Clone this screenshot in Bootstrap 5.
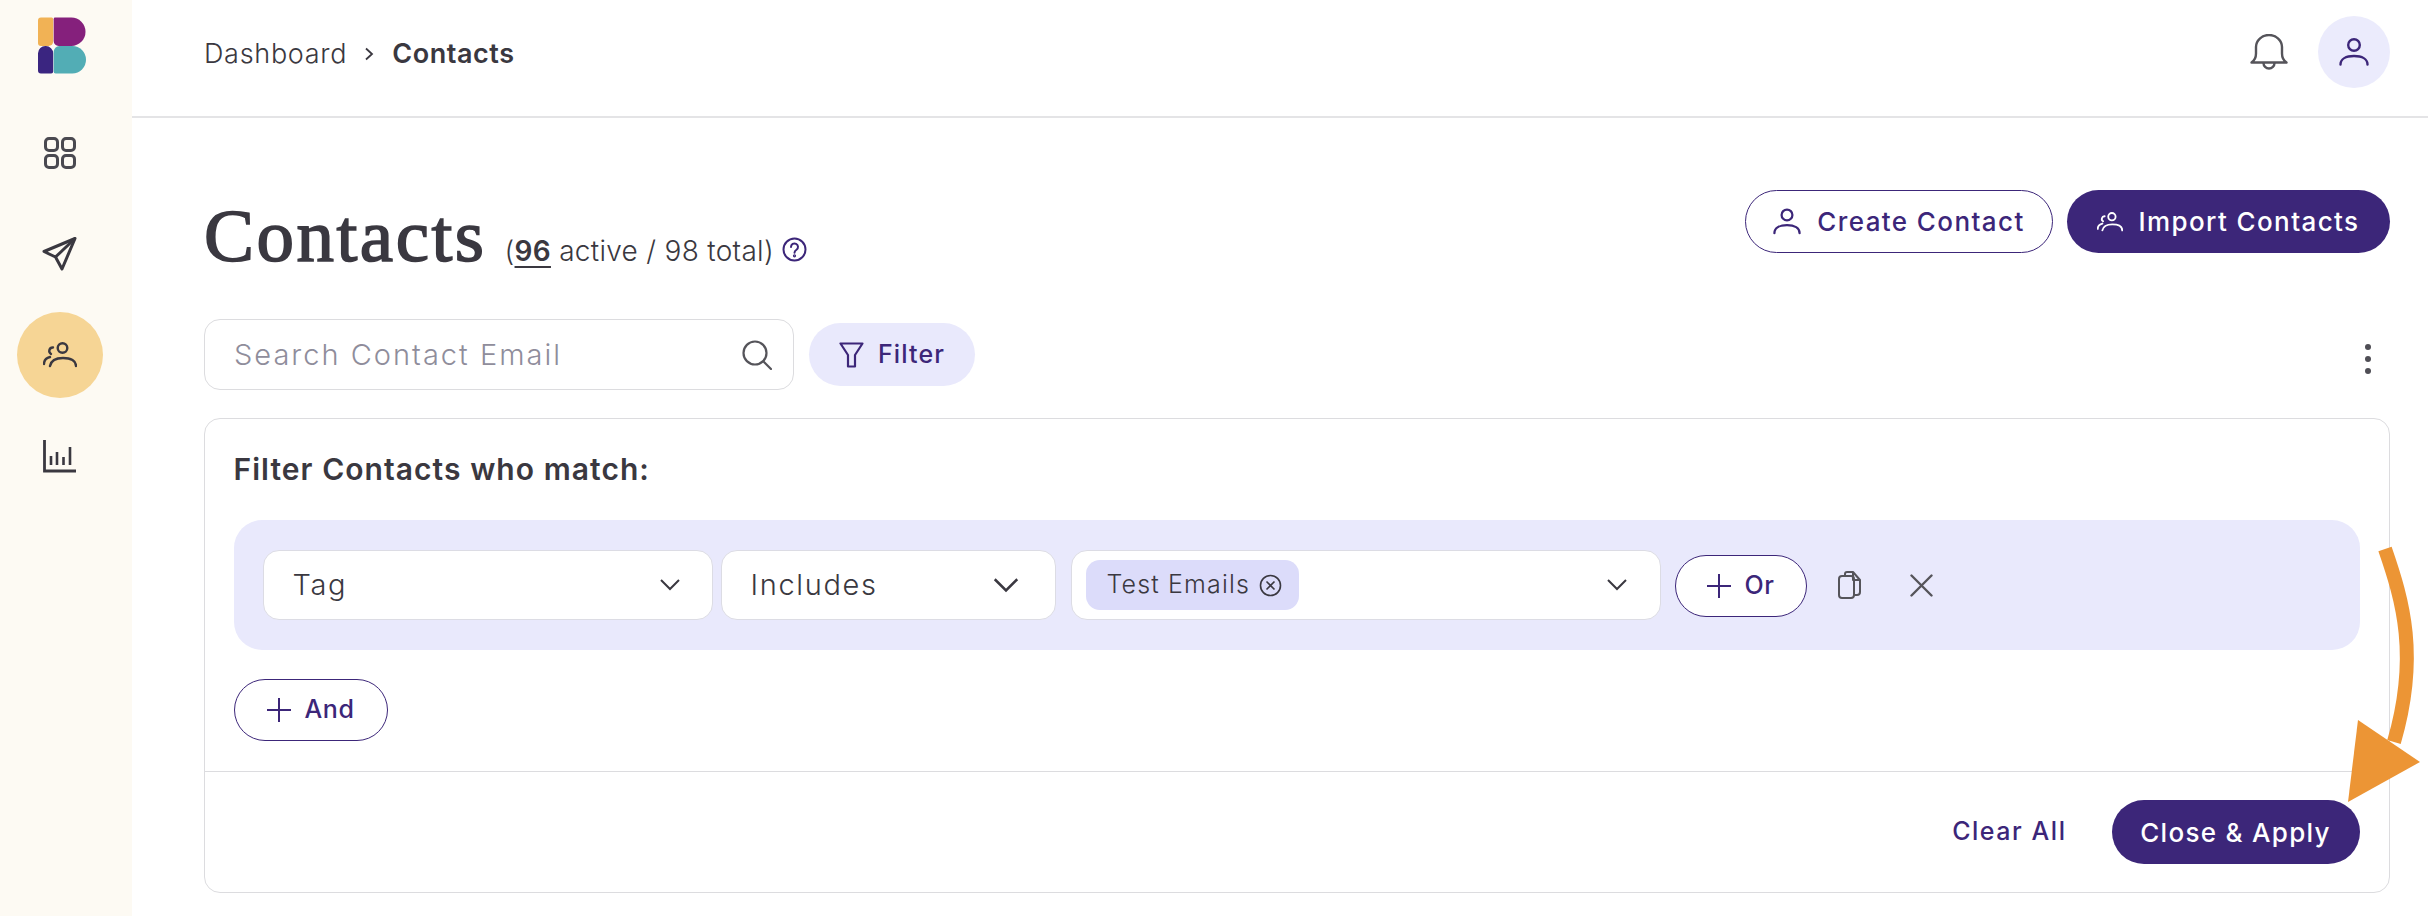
<!doctype html>
<html lang="en"><head><meta charset="utf-8"><title>Contacts</title>
<link href="https://cdn.jsdelivr.net/npm/bootstrap@5.3.0/dist/css/bootstrap.min.css" rel="stylesheet">
<style>
:root{--ink:#3a3840;--pur:#3c2679;--lav:#e9e9fc;--line:#dcdcdf}
html,body{height:916px;overflow:hidden}
body{font-family:Inter,"Noto Sans",sans-serif;color:var(--ink);background:#fff}
svg{display:block;flex:none}
.appwrap{height:916px;position:relative}
.siderail{width:132px;background:#fdfaf3;flex:none}
.brand{margin:17px 0 36px 38px;width:48px;height:57px}
.railitem{width:86px;height:86px;margin:0 0 15px 17px;border-radius:50%}
.railitem.on{background:#f6d595}
.topbar{height:118px;border-bottom:2px solid #e4e4e6;padding:0 38px 12px 72px}
.crumb{font-size:27px;font-weight:300;letter-spacing:.7px;margin-top:4px}
.crumb b{font-weight:600;letter-spacing:.55px}
.crumbsep{margin:0 18px 0 17px}
.avatarbtn{width:72px;height:72px;border-radius:50%;background:#ebebfc;margin-left:30px}
.workarea{padding:72px 38px 0 72px}
.titlerow{height:63px;margin-bottom:66px}
.pagehead{font-family:"Liberation Serif",serif;font-weight:400;-webkit-text-stroke:1.6px var(--ink);font-size:75px;line-height:63px;margin:0;color:var(--ink);letter-spacing:2.5px;position:relative;top:14px}
.countline{font-size:28px;font-weight:300;letter-spacing:.3px;margin-left:18px;position:relative;top:14px}
.countline u{font-weight:600;text-underline-offset:5px}
.helpmark{margin:0 0 0 8px;position:relative;top:25px}
.pillbtn{height:63px;border-radius:32px;font-size:26px;font-weight:500;letter-spacing:1.4px;padding:0;display:inline-flex;align-items:center;justify-content:center}
.pillbtn.solid,.pillbtn.solid:hover{background:var(--pur);color:#fff;border:0}
.pillbtn.ghost,.pillbtn.ghost:hover{background:#fff;color:var(--pur);border:1.5px solid var(--pur)}
.actionset{gap:14px}
.createbtn{width:308px;gap:16px}
.importbtn{width:323px;gap:15px}
.searchbox{width:590px;height:71px;border:1.5px solid var(--line);border-radius:16px;padding:0 21px 0 29px}
.searchbox input{border:0;outline:0;padding:0;font-size:29px;font-weight:300;letter-spacing:2px;color:var(--ink);background:transparent;box-shadow:none}
.searchbox input::placeholder{color:#8f8d9b;opacity:1}
.pillbtn.filterbtn{width:166px;background:var(--lav);border:0;color:var(--pur);margin-left:15px;gap:14px;font-size:25px;letter-spacing:1.1px}
.filterbtn:hover{background:var(--lav);color:var(--pur)}
.kebabwrap{margin:0 19px 0 auto;padding-top:8px;gap:6px}
.kebabwrap i{width:6px;height:6px;border-radius:50%;background:#4f4e55;display:block}
.filtercard{--bs-card-border-color:var(--line);--bs-card-border-radius:16px;border-width:1.5px;height:475px;margin-top:28px;width:2186px}
.filtertitle{font-size:30px;font-weight:600;line-height:34px;margin:0 0 34px;letter-spacing:1.05px;color:var(--ink)}
.filterbody{padding:33px 29.500px 0 28.500px}
.rulepanel{height:130px;background:var(--lav);border-radius:28px;padding:0 29px}
.fieldbox{height:70px;background:#fff;border:1.5px solid #dcdce4;border-radius:16px;padding:0 32px 0 29px;font-size:29px;font-weight:300;letter-spacing:1.65px}
.fieldtag{width:450px;margin-right:8px}
.fieldop{width:335px;margin-right:15px}
.fieldval{width:590px;padding:0 33px 0 14px;margin-right:14px}
.fieldop svg{width:26px;height:15px;margin-right:4px}
.chipval{height:50px;width:213px;background:#dcdcfa;border-radius:14px;font-size:25px;font-weight:300;gap:9px;padding-left:21px;letter-spacing:1.15px}
.pillbtn.addbtn{height:62px;background:#fff;gap:12px;font-size:25px;letter-spacing:.6px}
.addor{width:132px;margin-top:2px}
.addand{width:154px;margin-top:29px}
.iconact{margin-left:31px}
.iconx{margin-left:49px}
.cardfoot{height:121px;border-top:1.5px solid var(--line);padding:0 29.500px 0 0;gap:45px}
.clearlink{font-size:25px;font-weight:500;color:var(--pur);text-decoration:none;letter-spacing:1.55px}
.closebtn{width:248px;height:64px}
.pillbtn.closebtn{letter-spacing:1.3px}
.callout{position:absolute;left:2340px;top:540px}
</style></head>
<body>
<div class="appwrap d-flex">
<aside class="siderail d-flex flex-column">
  <svg class="brand" viewBox="0 0 49 57"><path fill="#f1b255" d="M3 0h11q1.500 0 1.500 2v22q0 5-5 5H3q-3 0-3-3V3q0-3 3-3z"/><path fill="#85207c" d="M17 0h17a14.500 14.500 0 0 1 0 29H21a5 5 0 0 1-5-5V2q0-2 1-2z"/><path fill="#3a2580" d="M8 29a7.500 7.500 0 0 1 7.500 7.500V55q0 2-2 2H3q-3 0-3-3V36.500A7.500 7.500 0 0 1 8 29z"/><path fill="#52adb5" d="M22 29h13a14 14 0 0 1 0 28H18q-2 0-2-2V35a6 6 0 0 1 6-6z"/></svg>
  <div class="railitem d-flex align-items-center justify-content-center"><svg width="32" height="32" viewBox="0 0 32 32" fill="none" stroke="#4a4950" stroke-width="3"><rect x="1.500" y="1.500" width="12" height="12" rx="3.500"/><rect x="18.500" y="1.500" width="12" height="12" rx="3.500"/><rect x="1.500" y="18.500" width="12" height="12" rx="3.500"/><rect x="18.500" y="18.500" width="12" height="12" rx="3.500"/></svg></div>
  <div class="railitem d-flex align-items-center justify-content-center"><svg width="36" height="34" viewBox="0 0 36 34" fill="none" stroke="#3a3840" stroke-width="3" stroke-linejoin="round"><path d="M33 1.500 2 14.500l11.500 5.500L20 32z"/><path d="M33 1.500 13.500 20"/></svg></div>
  <div class="railitem on d-flex align-items-center justify-content-center"><svg width="34" height="26" viewBox="0 0 34 26" fill="none" stroke="#3a3840" stroke-width="2.400" stroke-linecap="round"><circle cx="19.500" cy="6" r="4.800"/><path d="M33 24c0-5-5-8-13-8s-12 3-13 8"/><path d="M10 5.500a3.500 3.500 0 0 0-2 6.500"/><path d="M1 22c0-4 2-6 6-7"/></svg></div>
  <div class="railitem d-flex align-items-center justify-content-center"><svg width="34" height="34" viewBox="0 0 34 34" fill="none" stroke="#3a3840" stroke-width="2.600"><path d="M1.500 1v31H33" stroke-width="2.800"/><path d="M8 17v9M14 13v13M20.500 18v8M27 8v18"/></svg></div>
</aside>
<div class="flex-grow-1">
  <header class="topbar d-flex align-items-center justify-content-between">
    <div class="crumb d-flex align-items-center">Dashboard<svg class="crumbsep" width="10" height="14" viewBox="0 0 10 14" fill="none" stroke="#3a3840" stroke-width="1.800"><path d="M2 1.500 8 7l-6 5.500"/></svg><b>Contacts</b></div>
    <div class="d-flex align-items-center">
      <svg width="38" height="36" viewBox="0 0 38 36" fill="none" stroke="#55545a" stroke-width="2.400" stroke-linejoin="round"><path d="M1.500 28.500c3-2 4.500-4 4.500-9V13a13 12 0 0 1 26 0v6.500c0 5 1.500 7 4.500 9z"/><path d="M13.500 29a5.500 5.500 0 0 0 11 0"/></svg>
      <div class="avatarbtn d-flex align-items-center justify-content-center"><svg width="30" height="28" viewBox="0 0 30 28" fill="none" stroke="#3c2679" stroke-width="2.400" stroke-linecap="round"><circle cx="15" cy="7" r="5.800"/><path d="M1.500 26.500c0-5.500 5.500-8.500 13.500-8.500s13.500 3 13.500 8.500"/></svg></div>
    </div>
  </header>
  <main class="workarea">
    <div class="titlerow d-flex justify-content-between align-items-start">
      <div class="d-flex align-items-baseline">
        <h1 class="pagehead">Contacts</h1>
        <span class="countline">(<u>96</u> active / 98 total)</span>
        <svg class="helpmark align-self-center" width="25" height="25" viewBox="0 0 25 25" fill="none" stroke="#3c2679" stroke-width="2"><circle cx="12.500" cy="12.500" r="11"/><path d="M9 10a3.500 3.500 0 1 1 5.500 2.800c-1.300.9-2 1.500-2 3" stroke-linecap="round"/><circle cx="12.500" cy="18.800" r=".6"/></svg>
      </div>
      <div class="d-flex actionset">
        <button class="btn pillbtn ghost createbtn"><svg width="28" height="27" viewBox="0 0 30 28" fill="none" stroke="#3c2679" stroke-width="2.400" stroke-linecap="round"><circle cx="15" cy="7" r="5.800"/><path d="M1.500 26.500c0-5.500 5.500-8.500 13.500-8.500s13.500 3 13.500 8.500"/></svg>Create Contact</button>
        <button class="btn pillbtn solid importbtn"><svg width="26" height="22" viewBox="0 0 34 26" fill="none" stroke="#fff" stroke-width="2.400" stroke-linecap="round"><circle cx="19.500" cy="6" r="4.800"/><path d="M33 24c0-5-5-8-13-8s-12 3-13 8"/><path d="M10 5.500a3.500 3.500 0 0 0-2 6.500"/><path d="M1 22c0-4 2-6 6-7"/></svg>Import Contacts</button>
      </div>
    </div>
    <div class="d-flex align-items-center">
      <div class="searchbox d-flex align-items-center"><input class="form-control" placeholder="Search Contact Email" aria-label="Search"><svg width="30" height="30" viewBox="0 0 30 30" fill="none" stroke="#55545a" stroke-width="2.200" stroke-linecap="round"><circle cx="13" cy="13" r="11.500"/><path d="m21.500 21.500 7.500 7.500"/></svg></div>
      <button class="btn pillbtn filterbtn"><svg width="25" height="26" viewBox="0 0 25 26" fill="none" stroke="#3c2679" stroke-width="2.200" stroke-linejoin="round"><path d="M1.500 1.500h22L16 13v11.500H9V13z"/></svg>Filter</button>
      <div class="kebabwrap d-flex flex-column"><i></i><i></i><i></i></div>
    </div>
    <section class="card filtercard">
      <div class="filterbody flex-grow-1">
        <h2 class="filtertitle">Filter Contacts who match:</h2>
        <div class="rulepanel d-flex align-items-center">
          <div class="fieldbox fieldtag d-flex align-items-center justify-content-between">Tag<svg width="20" height="12" viewBox="0 0 20 12" fill="none" stroke="#3a3840" stroke-width="2"><path d="m1 1 9 9 9-9"/></svg></div>
          <div class="fieldbox fieldop d-flex align-items-center justify-content-between">Includes<svg width="20" height="12" viewBox="0 0 20 12" fill="none" stroke="#3a3840" stroke-width="2"><path d="m1 1 9 9 9-9"/></svg></div>
          <div class="fieldbox fieldval d-flex align-items-center justify-content-between"><span class="chipval d-flex align-items-center">Test Emails<svg width="23" height="23" viewBox="0 0 23 23" fill="none" stroke="#3a3840" stroke-width="1.600"><circle cx="11.500" cy="11.500" r="10"/><path d="m7.500 7.500 8 8m0-8-8 8"/></svg></span><svg width="20" height="12" viewBox="0 0 20 12" fill="none" stroke="#3a3840" stroke-width="2"><path d="m1 1 9 9 9-9"/></svg></div>
          <button class="btn pillbtn ghost addbtn addor"><svg width="26" height="26" viewBox="0 0 26 26" stroke="#3c2679" stroke-width="2"><path d="M13 1v24M1 13h24"/></svg>Or</button>
          <svg class="iconact" width="23" height="28" viewBox="0 0 23 28" fill="none" stroke="#55545a" stroke-width="2" stroke-linejoin="round"><path d="M7 5V3q0-2 2-2h6l7 8v12q0 3-3 3h-3"/><path d="M15 1v8h7"/><rect x="1" y="5" width="15" height="22" rx="3"/></svg>
          <svg class="iconx" width="23" height="23" viewBox="0 0 23 23" stroke="#55545a" stroke-width="2.400" stroke-linecap="round"><path d="m1.500 1.500 20 20m0-20-20 20"/></svg>
        </div>
        <button class="btn pillbtn ghost addbtn addand"><svg width="26" height="26" viewBox="0 0 26 26" stroke="#3c2679" stroke-width="2"><path d="M13 1v24M1 13h24"/></svg>And</button>
      </div>
      <div class="cardfoot d-flex align-items-center justify-content-end">
        <a class="clearlink" href="#">Clear All</a>
        <button class="btn pillbtn solid closebtn">Close &amp; Apply</button>
      </div>
    </section>
  </main>
</div>
<svg class="callout" width="88" height="270" viewBox="0 0 88 270"><path d="M45 9c18 52 34 107 9 193" fill="none" stroke="#ec9535" stroke-width="14"/><path fill="#ec9535" d="M18 180 80 222 8 262z"/></svg>
</div>
</body></html>
